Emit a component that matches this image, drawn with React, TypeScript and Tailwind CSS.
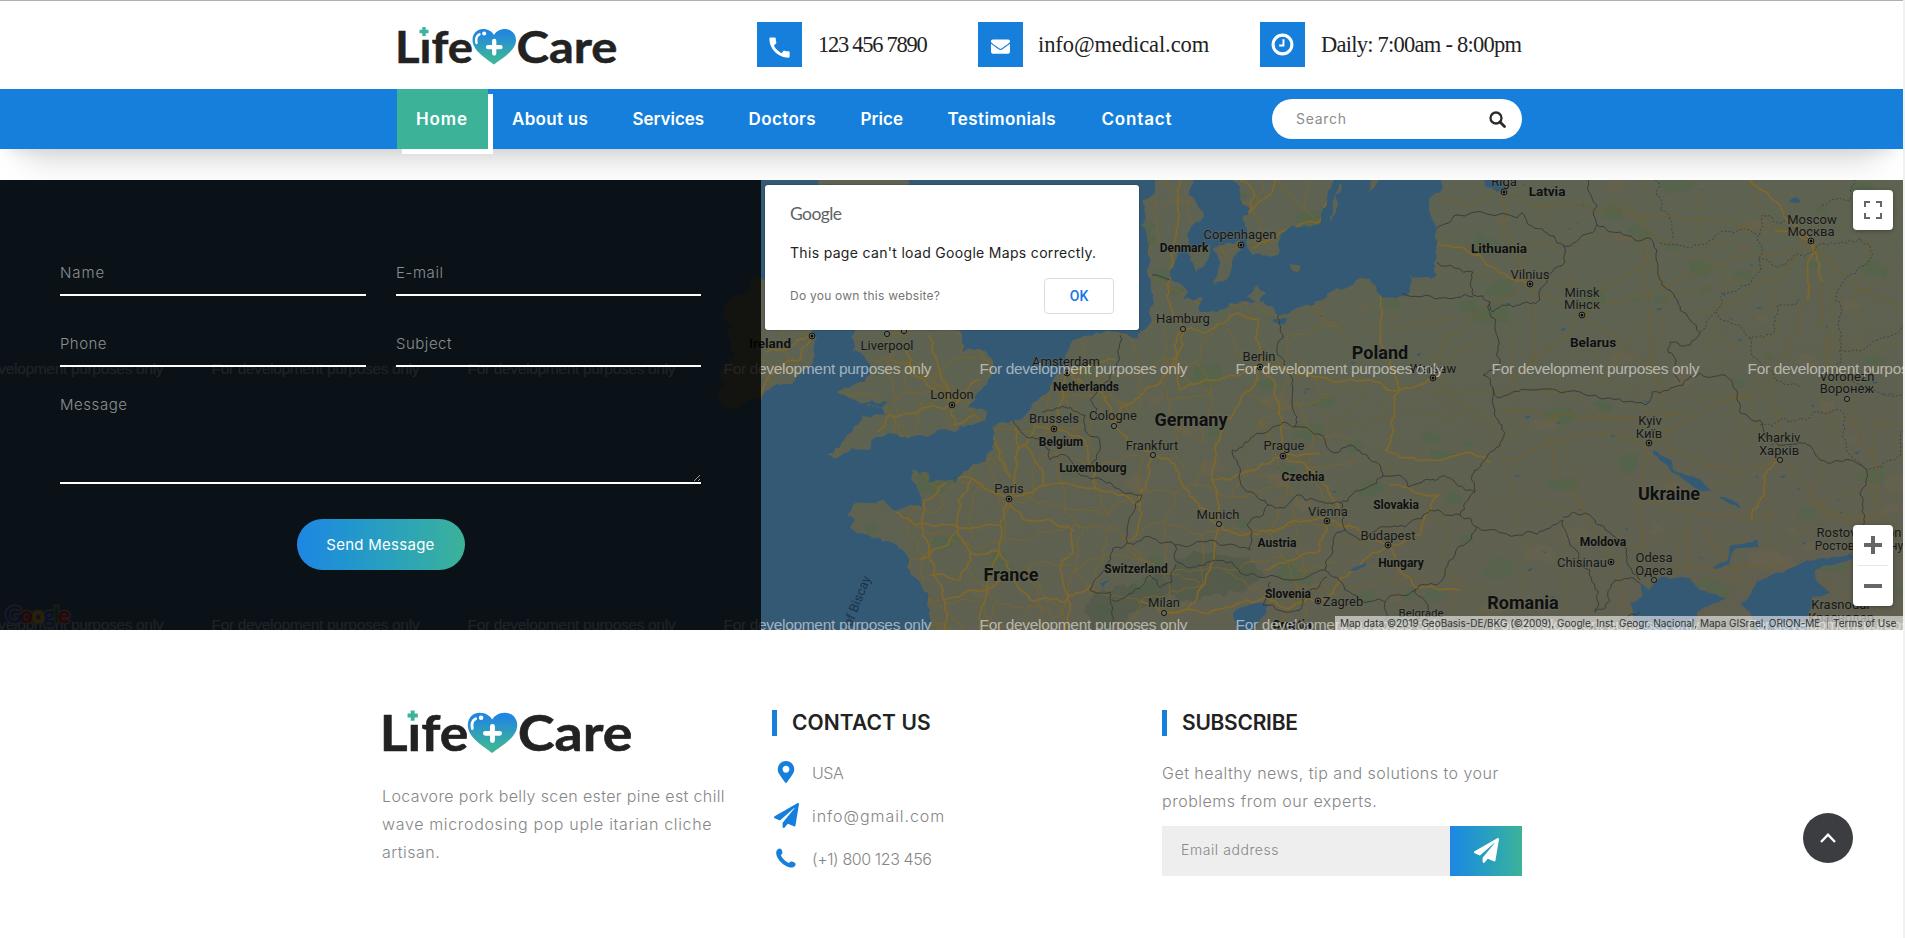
import React from "react";
import { FaEnvelope, FaMapMarkerAlt, FaPaperPlane } from "react-icons/fa";
import { MdCall } from "react-icons/md";

type Pt = [number, number];

function random(seed: number) {
  let s = seed;
  return () => {
    s = (s * 16807) % 2147483647;
    return s / 2147483647;
  };
}

function parse(src: string): Pt[] {
  return src.trim().split(/\s+/).map((p) => p.split(",").map(Number) as Pt);
}

/* Splits every segment at displaced midpoints so straight outlines look surveyed. */
function rough(src: string | Pt[], amp: number, seed: number, close = false) {
  const rnd = random(seed * 7919 + 13);
  let pts = typeof src === "string" ? parse(src) : src;
  if (close) pts = [...pts, pts[0]];
  for (let level = 0; level < 3; level++) {
    const next: Pt[] = [pts[0]];
    for (let i = 1; i < pts.length; i++) {
      const [ax, ay] = pts[i - 1];
      const [bx, by] = pts[i];
      const len = Math.hypot(bx - ax, by - ay);
      if (len > 5) {
        const k = (rnd() - 0.5) * amp * Math.min(1, len / 16);
        next.push([(ax + bx) / 2 - ((by - ay) / len) * k, (ay + by) / 2 + ((bx - ax) / len) * k]);
      }
      next.push(pts[i]);
    }
    pts = next;
  }
  return "M" + pts.map(([x, y]) => `${x.toFixed(1)},${y.toFixed(1)}`).join("L") + (close ? "Z" : "");
}

const LAND = [
  "730,300 745,295 755,275 790,290 812,325 817,337 815,355 808,368 795,380 780,385 762,400 745,403 725,407 718,395 728,383 719,372 735,355 726,335 735,325 722,315",
  "855,325 851,337 852,352 865,357 870,375 865,382 848,388 837,392 845,395 858,402 872,400 888,402 878,408 866,405 885,415 862,415 852,432 835,448 827,455 837,458 852,448 870,450 877,437 888,433 905,437 918,435 927,437 937,430 955,432 968,425 985,420 987,412 968,408 973,402 978,392 988,380 993,365 988,355 975,350 962,352 962,340 955,325",
  "816,170 818,188 908,188 904,170",
  "930,640 930,610 928,593 918,580 907,567 908,557 897,545 882,542 862,533 850,527 855,520 847,515 852,507 883,500 893,510 922,507 918,490 912,470 927,472 928,482 955,483 958,477 985,462 993,450 992,427 1015,420 1030,410 1048,392 1063,372 1065,358 1080,338 1113,332 1138,338 1150,316 1153,305 1151,285 1149,245 1141,225 1143,200 1155,187 1160,170 1192,170 1189,195 1203,212 1200,222 1187,235 1190,245 1177,258 1170,275 1182,285 1188,292 1183,298 1203,298 1200,312 1217,312 1230,303 1257,300 1278,315 1297,308 1323,300 1337,288 1370,279 1375,285 1380,295 1390,298 1410,292 1410,275 1437,275 1434,263 1435,235 1433,195 1443,187 1443,170 1920,170 1920,640",
  "1232,170 1240,198 1250,208 1242,218 1247,238 1253,255 1278,255 1280,235 1293,225 1317,225 1327,205 1332,170",
  "1213,248 1240,240 1243,246 1232,262 1226,280 1214,286 1218,270",
  "1187,248 1210,246 1206,262 1196,272",
  "1330,220 1335,195 1343,178 1338,205 1331,222",
  "1368,192 1372,178 1383,176 1374,188",
  "1290,263 1300,266 1298,272 1291,269",
  "1246,296 1258,285 1266,294 1258,303",
];

const WATER = [
  "1483,170 1485,186 1497,192 1506,186 1504,170",
  "1633,616 1630,603 1642,597 1640,583 1650,590 1660,577 1680,577 1690,578 1700,590 1716,594 1726,598 1715,603 1697,612 1692,640 1634,640",
  "1740,603 1752,592 1757,581 1783,573 1807,560 1835,557 1850,553 1853,559 1830,566 1815,570 1817,582 1830,592 1812,597 1808,616 1805,640 1762,640 1750,612",
  "1233,613 1250,605 1268,604 1266,614 1258,622 1250,640 1243,640 1236,626",
  "1350,571 1358,566 1366,562 1366,566 1354,571",
  "1653,450 1662,456 1671,460 1673,470 1684,474 1700,479 1712,492 1700,491 1682,478 1668,466 1653,454",
  "1719,497 1732,500 1741,509 1728,503",
  "1713,567 1728,560 1730,546 1744,544 1757,539 1758,547 1735,549 1730,562 1716,569",
  "1788,202 1795,197 1801,201 1794,203",
  "1100,583 1110,580 1103,588",
  "1163,538 1176,546 1170,543",
  "1272,320 1287,318 1285,324",
];

const BORDERS = [
  "1152,275 1170,280",
  "1278,315 1283,338 1277,352 1288,372 1292,405 1297,417 1295,427",
  "1295,427 1283,422 1270,430 1250,440 1232,450 1238,465 1240,480 1252,492 1268,505 1275,508 1285,508 1297,495 1315,500 1330,503 1340,503 1352,495 1368,487 1383,476 1380,465 1367,455 1357,450 1350,445 1335,453 1325,440 1310,430 1295,427",
  "1383,476 1400,475 1408,487 1430,480 1450,478 1465,490 1475,492",
  "1437,262 1473,272 1473,295 1490,302 1498,338 1500,362 1483,375 1493,388 1493,405 1502,425 1502,440 1485,460 1472,475 1475,492 1460,515",
  "1402,293 1440,298 1473,297",
  "1437,228 1457,215 1517,218 1522,213 1527,223 1547,233 1557,243 1563,245 1565,262 1552,272 1540,300 1520,305 1493,312 1490,302",
  "1563,245 1580,238 1597,225 1597,205 1588,190 1588,180",
  "1597,225 1620,232 1635,240 1650,238 1657,250 1658,275 1670,290 1680,310 1690,320 1700,333 1690,345 1670,342 1668,352 1675,365 1680,382",
  "1493,388 1500,398 1530,390 1580,392 1610,398 1645,405 1652,392 1683,385 1700,373 1728,378 1737,400 1740,413 1760,420 1765,435 1785,445 1805,443 1820,460 1850,460 1867,473 1860,495 1865,515 1862,530",
  "1460,515 1477,527 1523,535 1550,528 1563,520 1570,545 1590,570 1597,600 1595,612 1610,600 1615,580 1640,583",
  "1563,517 1585,513 1600,525 1612,535 1625,545 1628,565 1640,580",
  "1460,515 1430,510 1410,522 1385,527 1360,540 1345,530 1342,503",
  "1477,527 1455,555 1437,585 1415,590 1385,602 1360,600 1345,590 1325,570 1333,540 1345,530",
  "1325,570 1290,580 1240,573 1232,562 1210,562 1190,568 1175,560 1175,545 1210,540 1250,550 1252,540 1247,525 1260,517 1268,505",
  "1270,582 1263,605 1300,610 1310,590 1327,577",
  "1385,602 1387,625 1400,634",
  "1415,590 1428,605 1424,620 1430,632",
  "1013,420 1022,433 1032,437 1050,450 1050,460 1065,455 1077,472 1098,478 1115,488 1142,495 1127,533 1127,543 1113,548 1100,575 1090,590 1110,592 1112,615 1105,632",
  "1042,412 1065,407 1085,415 1085,430 1098,437 1100,450 1090,467",
  "1120,335 1117,368 1100,385 1090,400 1098,420",
  "1127,543 1150,537 1175,545",
  "1112,600 1125,598 1140,588 1150,575 1160,588 1172,582 1176,565",
  "1620,632 1625,620 1640,612",
];

const DOTTED = [
  "1655,180 1660,210 1672,225 1672,240",
  "1660,243 1700,245 1720,232 1758,235 1760,260 1748,285 1722,292 1716,312 1700,333",
  "1758,260 1785,265 1800,255 1815,250 1850,240 1870,245 1868,262 1850,275 1838,290 1842,310 1840,350 1870,345 1903,325",
  "1760,235 1762,215 1785,220",
  "1716,312 1740,325 1750,338 1775,330 1778,305 1800,298",
  "1750,338 1758,360 1775,380 1800,388",
  "1760,425 1780,420 1800,418 1840,410 1845,440 1865,470 1895,460 1903,430",
  "1840,350 1835,370 1865,390 1903,395",
  "1822,205 1850,200 1855,180",
];

const ROADS = [
  "1009,499 1045,486 1095,488 1140,505",
  "1009,499 988,490 972,478 955,480",
  "1009,499 1000,525 958,528 916,525 895,512",
  "958,528 948,545 920,560",
  "1009,499 1025,520 1050,520 1073,530 1073,553 1063,560 1068,600",
  "1009,499 1016,470 1018,445 1015,428",
  "1045,486 1038,465 1022,445",
  "972,478 958,500 958,528 970,552 1000,552 1010,570",
  "945,482 925,500 922,520 930,560 943,590 945,630",
  "970,552 960,580 930,575",
  "943,600 985,590 1010,575 1030,600 1065,602 1090,585",
  "1068,600 1065,630",
  "1000,525 995,560 985,600 980,630",
  "991,430 1000,460 1010,478",
  "1054,429 1035,425 1018,450",
  "1054,429 1085,440 1095,470 1096,490",
  "1054,429 1062,400 1067,373 1090,365 1115,360",
  "1067,373 1085,385 1105,400 1114,426 1130,445 1153,455",
  "1114,426 1120,410 1140,395 1165,375 1183,345 1183,329",
  "1153,455 1170,460 1180,480 1195,500 1219,524",
  "1153,455 1147,480 1140,505 1132,540",
  "1183,329 1215,328 1237,313 1258,320 1260,367",
  "1183,329 1176,355 1180,390 1205,380 1240,375 1260,367",
  "1260,367 1250,390 1235,410 1220,440 1212,480 1219,524",
  "1260,367 1275,390 1283,420 1283,456",
  "1183,329 1168,300 1170,270 1175,240 1178,200 1182,180",
  "1260,367 1320,377 1370,380 1400,390 1433,378",
  "1380,295 1380,340 1390,360 1400,390 1392,420 1385,450",
  "1283,456 1310,470 1330,495 1342,515",
  "1283,456 1255,470 1230,480 1212,480",
  "1283,456 1320,454",
  "1327,521 1295,520 1270,530 1245,535 1219,524",
  "1327,521 1320,550 1290,560 1265,570",
  "1327,521 1350,525 1370,540 1388,545",
  "1388,545 1420,535 1432,510 1438,495 1390,485",
  "1388,545 1405,575 1420,588 1460,590",
  "1388,545 1350,572 1318,601",
  "1318,601 1290,608 1260,600 1235,605 1200,612 1164,613 1140,600",
  "1164,613 1190,605 1210,570 1219,524",
  "1385,450 1430,460 1475,455 1490,462",
  "1250,213 1255,195 1240,180",
  "1250,213 1270,195 1275,180",
  "1253,248 1270,240 1290,228 1317,223 1330,190",
  "1437,242 1480,255 1500,273 1530,284",
  "1750,180 1780,205 1787,220 1811,241",
  "1811,241 1808,275 1807,300",
  "1811,241 1820,265 1822,282",
  "1811,241 1790,232 1775,230",
  "1780,460 1764,475 1760,500 1752,520",
  "952,405 935,390 915,375 905,345",
  "952,405 920,410 890,415 878,432",
  "952,405 965,392 980,380",
  "952,405 955,425 975,415",
  "952,405 940,370 928,335",
  "812,336 800,360 770,375 762,398",
  "812,336 785,350 765,352",
];

const THIN = [
  "1504,192 1540,208 1580,205 1640,215 1700,220 1750,227",
  "1811,241 1755,255 1720,263 1695,275 1655,287 1600,305 1582,315",
  "1811,241 1770,280 1720,305 1705,312",
  "1582,315 1560,340 1535,358 1510,380",
  "1582,315 1620,345 1650,368 1660,382",
  "1582,315 1540,295 1530,284",
  "1530,284 1535,330 1532,370",
  "1582,315 1610,285 1645,263 1642,220 1608,203",
  "1645,263 1648,300 1650,345 1657,380 1670,420",
  "1811,241 1845,275 1870,292 1903,308",
  "1822,282 1825,330 1830,365 1845,390",
  "1807,300 1795,335 1775,370 1772,400 1780,450",
  "1845,399 1860,430 1878,470 1875,520",
  "1649,443 1600,435 1550,440 1500,465",
  "1649,443 1640,500 1643,560",
  "1649,443 1700,460 1740,475 1780,460",
  "1780,460 1810,490 1830,515 1870,520",
  "1649,443 1680,425 1730,400 1765,395",
  "1500,410 1560,415 1640,418 1690,412",
  "1643,500 1680,510 1740,518 1780,510",
  "1550,440 1560,480 1580,500 1610,560",
  "1654,577 1690,565 1720,570 1790,565",
  "1688,515 1690,550 1687,575",
  "1530,284 1500,300 1470,320 1440,345 1433,378",
  "1433,378 1470,410 1500,425",
  "1433,378 1460,350 1480,342",
  "1504,192 1508,230 1520,270 1530,284",
  "1504,192 1470,205 1440,198",
];

function network(x0: number, y0: number, x1: number, y1: number, step: number, seed: number) {
  const rnd = random(seed);
  const cols = Math.ceil((x1 - x0) / step);
  const rows = Math.ceil((y1 - y0) / step);
  const at: Pt[][] = [];
  for (let r = 0; r <= rows; r++) {
    at.push([]);
    for (let c = 0; c <= cols; c++) {
      at[r].push([x0 + (c + (rnd() - 0.5) * 0.9) * step, y0 + (r + (rnd() - 0.5) * 0.9) * step]);
    }
  }
  const out: string[] = [];
  for (let r = 0; r < rows; r++) {
    for (let c = 0; c < cols; c++) {
      if (rnd() < 0.72) out.push(rough([at[r][c], at[r][c + 1]], 8, seed + r * 31 + c));
      if (rnd() < 0.72) out.push(rough([at[r][c], at[r + 1][c]], 8, seed + r * 17 + c * 3));
      if (rnd() < 0.18) out.push(rough([at[r][c], at[r + 1][c + 1]], 8, seed + r + c * 5));
    }
  }
  return out.join("");
}

const DENSE = network(900, 330, 1330, 640, 34, 5) + network(1150, 170, 1340, 330, 40, 8) + network(760, 330, 1000, 440, 36, 12);
const SPARSE = network(1300, 175, 1910, 640, 52, 21);

const patchRnd = random(77);
const PATCHES = Array.from({ length: 150 }, (_, i) => {
  const x = 850 + patchRnd() * 1050;
  const y = 182 + patchRnd() * 440;
  const r = 4 + patchRnd() * 11;
  const pts: Pt[] = Array.from({ length: 7 }, (_, k) => {
    const a = (k / 7) * Math.PI * 2;
    const q = r * (0.5 + patchRnd() * 0.8);
    return [x + Math.cos(a) * q * 1.3, y + Math.sin(a) * q * 0.8] as Pt;
  });
  return { d: rough(pts, 5, i, true), green: i % 3 !== 0 };
});
const PONDS = Array.from({ length: 60 }, (_, i) => {
  const x = 1300 + patchRnd() * 600;
  const y = 182 + patchRnd() * 430;
  return rough([[x, y], [x + 2 + patchRnd() * 5, y - 2 + patchRnd() * 4], [x + 3, y + 2]], 2, i, true);
}).join("");

type Label = [string, number, number, number?];
const COUNTRIES: Label[] = [
  ["Latvia", 1547, 196, 13.5], ["Lithuania", 1499, 253, 13.5], ["Denmark", 1184, 252, 12], ["Poland", 1380, 359, 18],
  ["Belarus", 1593, 347, 13.5], ["Ireland", 770, 348, 13.5], ["Netherlands", 1086, 391, 12], ["Belgium", 1061, 446, 12],
  ["Luxembourg", 1093, 472, 12], ["France", 1011, 581, 18], ["Switzerland", 1136, 573, 12], ["Germany", 1191, 426, 18],
  ["Czechia", 1303, 481, 12], ["Slovakia", 1396, 509, 12], ["Austria", 1277, 547, 12], ["Hungary", 1401, 567, 12],
  ["Slovenia", 1288, 598, 12], ["Croatia", 1292, 629, 12], ["Romania", 1523, 609, 18], ["Ukraine", 1669, 500, 18],
  ["Moldova", 1603, 546, 12],
];
const CITIES: Label[] = [
  ["Riga", 1504, 186], ["Vilnius", 1530, 279], ["Copenhagen", 1240, 239], ["Hamburg", 1183, 323], ["Berlin", 1259, 361],
  ["Warsaw", 1433, 373], ["Moscow", 1812, 224], ["Москва", 1811, 236], ["Minsk", 1582, 297], ["Мінск", 1582, 309],
  ["Voronezh", 1847, 381], ["Воронеж", 1847, 393], ["Liverpool", 887, 350], ["Amsterdam", 1066, 366], ["London", 952, 399],
  ["Brussels", 1054, 423], ["Cologne", 1113, 420], ["Frankfurt", 1152, 450], ["Paris", 1009, 493], ["Prague", 1284, 450],
  ["Munich", 1218, 519], ["Vienna", 1328, 516], ["Budapest", 1388, 540], ["Zagreb", 1343, 606], ["Milan", 1164, 607],
  ["Belgrade", 1421, 617, 11.5], ["Kyiv", 1650, 425], ["Київ", 1649, 438], ["Kharkiv", 1779, 442], ["Харків", 1779, 455],
  ["Chisinau", 1582, 567], ["Odesa", 1654, 562], ["Одеса", 1654, 575], ["Rostov-on-Don", 1859, 537],
  ["Ростов-на-Дону", 1859, 550, 12], ["Krasnodar", 1841, 609], ["Краснодар", 1841, 622],
];
const CAPITALS: Pt[] = [
  [1504, 192], [1530, 284], [1241, 245], [1260, 367], [1433, 378], [1811, 241], [1582, 315], [812, 336], [1067, 373],
  [952, 405], [1054, 429], [1009, 499], [1283, 456], [1327, 521], [1388, 545], [1318, 601], [1649, 443], [1611, 562],
];
const TOWNS: Pt[] = [
  [1183, 329], [1847, 399], [887, 334], [904, 331], [1114, 426], [1153, 455], [1219, 524], [1164, 613], [1780, 460], [1654, 580],
];

function EuropeMap() {
  return (
    <svg viewBox="0 180 1903 450" className="block h-[450px] w-[1903px] font-['Roboto',sans-serif]">
      <defs>
        <clipPath id="land">
          {LAND.map((l, i) => (
            <path key={i} d={rough(l, 7, i + 1, true)} />
          ))}
        </clipPath>
        <linearGradient id="tone" x1="0" x2="1" y1="0" y2="1">
          <stop offset="0" stopColor="#5d6354" />
          <stop offset="0.55" stopColor="#5e6251" />
          <stop offset="1" stopColor="#615f4f" />
        </linearGradient>
      </defs>
      <rect x="0" y="180" width="1903" height="450" fill="#345975" />
      <g clipPath="url(#land)">
        <rect x="0" y="180" width="1903" height="450" fill="url(#tone)" />
        {PATCHES.map((p, i) => (
          <path key={i} d={p.d} fill={p.green ? "#4d6647" : "#69634f"} opacity={p.green ? 0.5 : 0.6} />
        ))}
        <path d={rough("1090,600 1120,585 1150,580 1175,560 1215,550 1250,555 1265,575 1230,590 1200,600 1150,600 1110,630 1085,630", 12, 3, true)} fill="#4f5847" opacity="0.6" />
        <path d={SPARSE} fill="none" stroke="#6d6134" strokeWidth="0.9" opacity="0.75" />
        <path d={DENSE} fill="none" stroke="#79652d" strokeWidth="1.1" opacity="0.8" />
        {THIN.map((l, i) => (
          <path key={i} d={rough(l, 6, i + 50)} fill="none" stroke="#715f2b" strokeWidth="1" />
        ))}
        {ROADS.map((l, i) => (
          <path key={i} d={rough(l, 6, i + 90)} fill="none" stroke="#80682a" strokeWidth="1.7" />
        ))}
        <path d={PONDS} fill="#345975" />
      </g>
      {WATER.map((l, i) => (
        <path key={i} d={rough(l, 4, i + 30, true)} fill="#345975" />
      ))}
      {BORDERS.map((l, i) => (
        <path key={i} d={rough(l, 7, i + 200)} fill="none" stroke="#3b3d3a" strokeWidth="1" />
      ))}
      {DOTTED.map((l, i) => (
        <path key={i} d={rough(l, 8, i + 300)} fill="none" stroke="#41443d" strokeWidth="1" strokeDasharray="2 2" />
      ))}
      {CAPITALS.map(([x, y]) => (
        <g key={x}>
          <circle cx={x} cy={y} r="2.9" fill="#74766d" stroke="#111" strokeWidth="1" />
          <circle cx={x} cy={y} r="1.5" fill="#080808" />
        </g>
      ))}
      {TOWNS.map(([x, y]) => (
        <circle key={x} cx={x} cy={y} r="2.6" fill="#65685c" stroke="#161616" strokeWidth="1" />
      ))}
      <g textAnchor="middle" fill="#161716" stroke="#686b5f" strokeWidth="1.6" strokeOpacity="0.6" paintOrder="stroke">
        {CITIES.map(([t, x, y, s]) => (
          <text key={t} x={x} y={y} fontSize={s ?? 13}>{t}</text>
        ))}
        <g fontWeight="700" fill="#0f100f">
          {COUNTRIES.map(([t, x, y, s]) => (
            <text key={t} x={x} y={y} fontSize={s}>{t}</text>
          ))}
        </g>
      </g>
      <text transform="translate(842 650) rotate(-68)" fontSize="13" fill="#1d3347">Bay of Biscay</text>
      <g fill="#fff" fillOpacity="0.55" fontSize="15.5" className="font-['Liberation_Sans',sans-serif]">
        {[374, 630].map((y) =>
          [-44.5, 211.5, 467.5, 723.5, 979.5, 1235.5, 1491.5, 1747.5].map((x) => (
            <text key={`${x}-${y}`} x={x} y={y} textLength="208">For development purposes only</text>
          )),
        )}
      </g>
      <g fontSize="23" fontWeight="700" className="font-['Lato',sans-serif]">
        <text x="5" y="623" textLength="65" fill="none" stroke="#8a8a8a" strokeWidth="3">Google</text>
        <text x="5" y="623" textLength="65">
          <tspan fill="#2a56c6">G</tspan><tspan fill="#c5221f">o</tspan><tspan fill="#d9a400">o</tspan><tspan fill="#2a56c6">g</tspan><tspan fill="#188038">l</tspan><tspan fill="#c5221f">e</tspan>
        </text>
      </g>
    </svg>
  );
}

function Logo({ className, id }: { className: string; id: string }) {
  return (
    <svg viewBox="0 0 220 40" className={className} role="img" aria-label="Life Care">
      <defs>
        <linearGradient id={id} x1="0" x2="0" y1="0" y2="1">
          <stop offset="0.1" stopColor="#2186e0" />
          <stop offset="0.85" stopColor="#3cb49b" />
        </linearGradient>
      </defs>
      <g fill="#222" stroke="#222" strokeWidth="0.5" fontSize="43.5" fontWeight="700" className="font-['Lato',sans-serif]">
        <text x="-2" y="37" textLength="78" lengthAdjust="spacingAndGlyphs">Life</text>
        <text x="119.500" y="37" textLength="101" lengthAdjust="spacingAndGlyphs">Care</text>
      </g>
      <rect x="21" y="0" width="12" height="12.5" fill="#fff" />
      <path d="M27 1v9M22.5 5.500h9" stroke="#3cb49b" strokeWidth="3.4" fill="none" />
      <path d="M97 38.500C90 33 75.500 25 75.500 14C75.500 7 80.500 3 86 3C91 3 95 5.500 97 9C99 5.500 103 3 108 3C114 3 119 7.500 119 14C119 25 104 33 97 38.500Z" fill={`url(#${id})`} />
      <path d="M97.200 15v12.500M91 21.200h12.500" stroke="#fff" strokeWidth="4.300" strokeLinecap="round" fill="none" />
      <path d="M79.500 17C78.500 12.500 80 9.500 82.500 8.300" stroke="#fff" strokeWidth="2.400" strokeLinecap="round" fill="none" />
      <circle cx="87.200" cy="7.500" r="2" fill="#fff" />
    </svg>
  );
}

function SearchIcon() {
  return (
    <svg viewBox="0 0 17 17" className="size-[17px]" fill="none" stroke="#2b2b2b">
      <circle cx="7" cy="7" r="5.500" strokeWidth="2.300" />
      <path d="M11 11l4.500 4.500" strokeWidth="2.800" strokeLinecap="round" />
    </svg>
  );
}

function ClockIcon() {
  return (
    <svg viewBox="0 0 24 24" className="size-[23px]" fill="none" stroke="#fff">
      <circle cx="12" cy="12" r="9.800" strokeWidth="3.200" />
      <path d="M13 6.500v6.500H8.500" strokeWidth="2" />
    </svg>
  );
}

function HandsetIcon() {
  return (
    <svg viewBox="0 0 20 20" className="size-5" fill="currentColor">
      <path d="M1.800 1.300C3.800-.2 5.200.2 6 2.600C6.700 4.800 6.700 5.400 5.400 6.600C4.900 7.100 5 7.600 5.400 8.300C7 11 9 13 11.800 14.600C12.500 15 12.900 15 13.400 14.500C14.500 13.300 15.200 13.300 17.300 14C19.900 14.900 20.200 16.200 18.700 18.200C17 20.200 13.300 20.100 9.300 17.600C4.400 14.500.4 9.600.2 5.200C.1 3.500.6 2.300 1.800 1.300Z" />
    </svg>
  );
}

const NAV = [
  { text: "About us", box: "w-[120.5px] tracking-[0.3px]" },
  { text: "Services", box: "w-[116px] tracking-[-0.03px]" },
  { text: "Doctors", box: "w-[112px] tracking-[0.38px]" },
  { text: "Price", box: "w-[87px] tracking-[0.08px]" },
  { text: "Testimonials", box: "w-[154px] tracking-[0.4px]" },
  { text: "Contact", box: "w-[114px] tracking-[0.84px]" },
];

const FIELDS = [
  { text: "Name", track: "tracking-[0.9px]" },
  { text: "E-mail", track: "tracking-[0.59px]" },
  { text: "Phone", track: "tracking-[0.45px]" },
  { text: "Subject", track: "tracking-[0.51px]" },
];

function FooterTitle({ children, track }: { children: string; track: string }) {
  return (
    <h2 className={`flex h-[26px] items-center border-l-[5px] border-[#167fdb] pl-[15px] text-[21px] font-semibold text-[#222] ${track}`}>{children}</h2>
  );
}

export default function App() {
  return (
    <div className="relative flex h-[938px] w-[1905px] overflow-hidden bg-white font-['Inter',sans-serif]">
      <div className="w-[1903px] shrink-0">
        <header className="relative">
          <div className="h-px bg-[#b0b0b0]" />
          <div className="ml-[397px] flex h-[88px] w-[1126px]">
            <Logo id="logo-top" className="mt-[25px] h-10 w-[220px] shrink-0" />
            <div className="ml-[140px] mt-[21px] flex h-[45px] items-center whitespace-nowrap font-['Liberation_Serif',serif] text-[22.5px] text-[#222]">
              <span className="flex size-[45px] shrink-0 items-center justify-center bg-[#167fdb] pt-[5px] text-white"><MdCall size={27} /></span>
              <span className="ml-4 w-[160px] shrink-0 tracking-[-1.28px]">123 456 7890</span>
              <span className="flex size-[45px] shrink-0 items-center justify-center bg-[#167fdb] pt-[3px] text-white"><FaEnvelope size={19} /></span>
              <span className="ml-[15px] w-[222px] shrink-0 tracking-[-0.09px]">info@medical.com</span>
              <span className="flex size-[45px] shrink-0 items-center justify-center bg-[#167fdb]"><ClockIcon /></span>
              <span className="ml-4 tracking-[-0.75px]">Daily: 7:00am - 8:00pm</span>
            </div>
          </div>
          <nav className="h-[60px] bg-[#167fdb] pl-[397px] text-[17px] font-semibold leading-[60px] text-white shadow-[0_32px_30px_-26px_rgba(0,0,0,0.4),0_10px_14px_-8px_rgba(0,0,0,0.12)]">
            <div className="flex w-[1125px]">
              <a className="h-[60px] w-[91px] bg-[#3cb299] pl-[19px] tracking-[0.9px] shadow-[5px_5px_0_#fff]">Home</a>
              <div className="ml-6 flex">
                {NAV.map((n) => (
                  <a key={n.text} className={n.box}>{n.text}</a>
                ))}
              </div>
              <div className="ml-auto mt-[10px] flex h-10 w-[250px] items-center rounded-full bg-white pl-6 pr-4">
                <input placeholder="Search" className="w-[193px] text-sm font-normal tracking-[0.7px] outline-none placeholder:text-[#8c8c8c]" />
                <SearchIcon />
              </div>
            </div>
          </nav>
        </header>

        <section className="relative mt-[31px] h-[450px]">
          <EuropeMap />
          <form className="absolute left-0 top-0 flex h-[450px] w-[761px] flex-col items-center bg-black/80 pt-[72px] text-[15px] font-light">
            <div className="grid w-[641px] grid-cols-[306px_305px] gap-x-[30px] gap-y-[27px]">
              {FIELDS.map((f) => (
                <input key={f.text} placeholder={f.text} className={`h-11 border-b-2 border-white pb-0.5 text-white outline-none placeholder:text-[#8b8f92] ${f.track}`} />
              ))}
            </div>
            <textarea placeholder="Message" className="mt-[27px] h-[90px] w-[641px] border-b-2 border-white tracking-[0.55px] outline-none placeholder:text-[#8b8f92]" />
            <button type="button" className="mt-[35px] h-[51px] w-[168px] rounded-full bg-linear-to-r from-[#1f86e3] to-[#3cb299] pt-px font-normal tracking-[0.26px] text-white">Send Message</button>
          </form>
          <div className="absolute left-[765px] top-[5px] h-[145px] w-[374px] rounded-[3px] bg-white px-[25px] pt-[17px] shadow-[0_0_2px_rgba(0,0,0,0.4)]">
            <div className="font-['Lato',sans-serif] text-[17.5px] leading-6 tracking-[-0.6px] text-[#5f6368]">Google</div>
            <div className="mt-[17px] whitespace-nowrap text-sm leading-5 tracking-[0.32px] text-[#222]">This page can't load Google Maps correctly.</div>
            <div className="mt-[15px] flex items-center justify-between">
              <span className="text-xs tracking-[0.24px] text-[#757575]">Do you own this website?</span>
              <button type="button" className="h-[36px] w-[70px] rounded border border-[#dadce0] font-['Roboto',sans-serif] text-sm font-medium text-[#1a73e8]">OK</button>
            </div>
          </div>
          <button type="button" aria-label="Fullscreen" className="absolute right-[10px] top-[10px] flex size-10 items-center justify-center rounded-sm bg-white shadow-[0_1px_4px_rgba(0,0,0,0.3)]">
            <svg viewBox="0 0 18 18" className="size-[18px]" fill="none" stroke="#666" strokeWidth="2">
              <path d="M1 6V1h5M12 1h5v5M17 12v5h-5M6 17H1v-5" />
            </svg>
          </button>
          <div className="absolute right-[10px] top-[345px] flex h-[81px] w-10 flex-col items-center rounded-sm bg-white shadow-[0_1px_4px_rgba(0,0,0,0.3)]">
            <button type="button" aria-label="Zoom in" className="flex h-10 items-center">
              <svg viewBox="0 0 18 18" className="size-[18px]" stroke="#666" strokeWidth="4"><path d="M0 9h18M9 0v18" /></svg>
            </button>
            <div className="h-px w-[30px] bg-[#e6e6e6]" />
            <button type="button" aria-label="Zoom out" className="flex h-10 items-center">
              <svg viewBox="0 0 18 18" className="size-[18px]" stroke="#666" strokeWidth="4"><path d="M0 9h18" /></svg>
            </button>
          </div>
          <div className="absolute right-0 top-[436px] flex h-[14px] w-[568px] items-center whitespace-nowrap bg-[#f5f5f5]/60 pl-[5px] text-[10px] text-[#333]">
            <span className="w-[487px] tracking-[-0.02px]">Map data ©2019 GeoBasis-DE/BKG (©2009), Google, Inst. Geogr. Nacional, Mapa GISrael, ORION-ME</span>
            <span className="border-l border-[#888] pl-[5px] leading-3">Terms of Use</span>
          </div>
        </section>

        <footer className="ml-[382px] flex text-base leading-7 text-[#868686]">
          <div className="w-[390px]">
            <Logo id="logo-foot" className="mt-[79px] h-[46px] w-[250px]" />
            <p className="mt-[27px] font-light">
              <span className="block tracking-[0.37px]">Locavore pork belly scen ester pine est chill</span>
              <span className="block tracking-[0.66px]">wave microdosing pop uple itarian cliche</span>
              <span className="block tracking-[0.5px]">artisan.</span>
            </p>
          </div>
          <div className="w-[390px] pt-[80px]">
            <FooterTitle track="tracking-[0.1px]">CONTACT US</FooterTitle>
            <ul className="mt-[16px] font-light">
              <li className="flex h-[43px] items-center">
                <span className="flex w-[28px] justify-center pb-[3px] text-[#167fdb]"><FaMapMarkerAlt size={22} /></span>
                <span className="ml-[12px] pb-0.5 tracking-[-0.5px]">USA</span>
              </li>
              <li className="flex h-[43px] items-center">
                <span className="flex w-[28px] justify-center pb-[3px] text-[#167fdb]"><FaPaperPlane size={25} /></span>
                <span className="ml-[12px] pb-0.5 tracking-[0.93px]">info@gmail.com</span>
              </li>
              <li className="flex h-[43px] items-center">
                <span className="flex w-[28px] justify-center pb-[3px] text-[#167fdb]"><HandsetIcon /></span>
                <span className="ml-[12px] pb-0.5 tracking-[-0.4px]">(+1) 800 123 456</span>
              </li>
            </ul>
          </div>
          <div className="w-[360px] pt-[80px]">
            <FooterTitle track="tracking-[-0.28px]">SUBSCRIBE</FooterTitle>
            <p className="mt-[23px] font-light">
              <span className="block tracking-[0.48px]">Get healthy news, tip and solutions to your</span>
              <span className="block tracking-[0.52px]">problems from our experts.</span>
            </p>
            <div className="mt-[11px] flex h-[50px]">
              <input placeholder="Email address" className="w-[288px] bg-[#eee] pb-0.5 pl-[19px] text-sm font-light tracking-[0.57px] outline-none placeholder:text-[#868686]" />
              <button type="button" aria-label="Subscribe" className="flex w-[72px] items-center justify-center bg-linear-to-r from-[#1f86e3] to-[#3cb299] pb-px text-white"><FaPaperPlane size={25} /></button>
            </div>
          </div>
        </footer>
      </div>
      <div className="w-[2px] bg-[#f1f1f1]" />
      <button type="button" aria-label="Back to top" className="absolute bottom-[75px] right-[52px] flex size-[50px] items-center justify-center rounded-full bg-[#3c3d41]">
        <svg viewBox="0 0 16 10" className="h-[10px] w-4" fill="none" stroke="#fff" strokeWidth="2.400"><path d="M1 9l7-7.300L15 9" /></svg>
      </button>
    </div>
  );
}
